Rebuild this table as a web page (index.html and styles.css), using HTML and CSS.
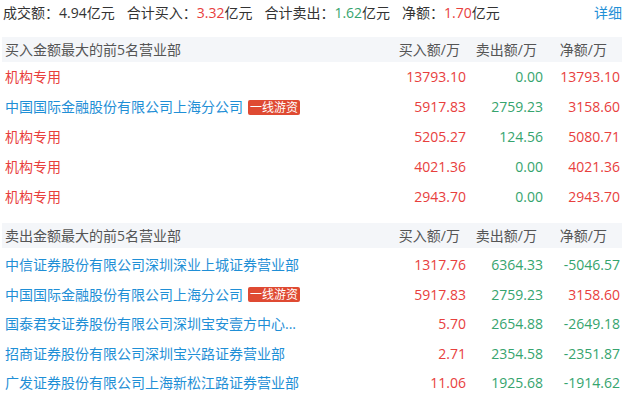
FILE: index.html
```html
<!DOCTYPE html>
<html lang="zh">
<head>
<meta charset="utf-8">
<link rel="stylesheet" href="styles.css">
</head>
<body>
<div class="wrap">
  <div class="summary">
    <span class="item">成交额：4.94亿元</span>
    <span class="item">合计买入：<span class="red">3.32</span>亿元</span>
    <span class="item">合计卖出：<span class="green">1.62</span>亿元</span>
    <span class="item">净额：<span class="red">1.70</span>亿元</span>
    <a class="detail">详细</a>
  </div>

  <div class="section">
    <div class="row head">
      <span class="name">买入金额最大的前5名营业部</span>
      <span class="num h-buy">买入额/万</span>
      <span class="num h-sell">卖出额/万</span>
      <span class="num h-net">净额/万</span>
    </div>
    <div class="row">
      <span class="name"><span class="org red">机构专用</span></span>
      <span class="num red">13793.10</span>
      <span class="num green">0.00</span>
      <span class="num red">13793.10</span>
    </div>
    <div class="row">
      <span class="name"><span class="org blue">中国国际金融股份有限公司上海分公司</span><span class="badge">一线游资</span></span>
      <span class="num red">5917.83</span>
      <span class="num green">2759.23</span>
      <span class="num red">3158.60</span>
    </div>
    <div class="row">
      <span class="name"><span class="org red">机构专用</span></span>
      <span class="num red">5205.27</span>
      <span class="num green">124.56</span>
      <span class="num red">5080.71</span>
    </div>
    <div class="row">
      <span class="name"><span class="org red">机构专用</span></span>
      <span class="num red">4021.36</span>
      <span class="num green">0.00</span>
      <span class="num red">4021.36</span>
    </div>
    <div class="row">
      <span class="name"><span class="org red">机构专用</span></span>
      <span class="num red">2943.70</span>
      <span class="num green">0.00</span>
      <span class="num red">2943.70</span>
    </div>
  </div>

  <div class="section">
    <div class="row head">
      <span class="name">卖出金额最大的前5名营业部</span>
      <span class="num h-buy">买入额/万</span>
      <span class="num h-sell">卖出额/万</span>
      <span class="num h-net">净额/万</span>
    </div>
    <div class="row">
      <span class="name"><span class="org blue">中信证券股份有限公司深圳深业上城证券营业部</span></span>
      <span class="num red">1317.76</span>
      <span class="num green">6364.33</span>
      <span class="num green">-5046.57</span>
    </div>
    <div class="row">
      <span class="name"><span class="org blue">中国国际金融股份有限公司上海分公司</span><span class="badge">一线游资</span></span>
      <span class="num red">5917.83</span>
      <span class="num green">2759.23</span>
      <span class="num red">3158.60</span>
    </div>
    <div class="row">
      <span class="name"><span class="org blue">国泰君安证券股份有限公司深圳宝安壹方中心...</span></span>
      <span class="num red">5.70</span>
      <span class="num green">2654.88</span>
      <span class="num green">-2649.18</span>
    </div>
    <div class="row">
      <span class="name"><span class="org blue">招商证券股份有限公司深圳宝兴路证券营业部</span></span>
      <span class="num red">2.71</span>
      <span class="num green">2354.58</span>
      <span class="num green">-2351.87</span>
    </div>
    <div class="row">
      <span class="name"><span class="org blue">广发证券股份有限公司上海新松江路证券营业部</span></span>
      <span class="num red">11.06</span>
      <span class="num green">1925.68</span>
      <span class="num green">-1914.62</span>
    </div>
  </div>
</div>
</body>
</html>
```

FILE: styles.css
```css
html, body {
  margin: 0;
  padding: 0;
  background: #ffffff;
}

body {
  font-family: "Open Sans", "Noto Sans CJK SC", sans-serif;
  font-size: 14px;
  color: #333333;
}

.wrap {
  width: 620px;
  margin-left: 2px;
}

.summary {
  display: flex;
  align-items: center;
  height: 26px;
  line-height: 26px;
  padding-left: 1px;
  white-space: nowrap;
}

.summary .item {
  margin-right: 12px;
}

.detail {
  margin-left: auto;
  color: #1f8fd6;
  cursor: pointer;
}

.section {
  margin-top: 11px;
}

.section + .section .row:not(.head) {
  height: 29.5px;
  line-height: 33px;
}

.row {
  display: grid;
  grid-template-columns: 1fr 90px 77px 77px;
  height: 30px;
  line-height: 30px;
  padding: 0 2px 0 3px;
  white-space: nowrap;
}

.row.head {
  height: 25px;
  line-height: 25px;
  background: #f4f6f9;
  color: #555555;
}

.name {
  display: flex;
  align-items: center;
  min-width: 0;
}

.org {
  white-space: nowrap;
}

.num {
  text-align: right;
}

.head .h-buy { padding-right: 6px; }
.head .h-sell { padding-right: 6px; }
.head .h-net { padding-right: 13px; }

.red { color: #e8403d; }
.green { color: #36a46e; }
.blue { color: #1f8fd6; }

.badge {
  display: inline-block;
  margin-left: 5px;
  padding: 0 2px;
  height: 15px;
  line-height: 15px;
  font-size: 12px;
  color: #ffffff;
  background: #df4a32;
  border-radius: 2px;
}
```
